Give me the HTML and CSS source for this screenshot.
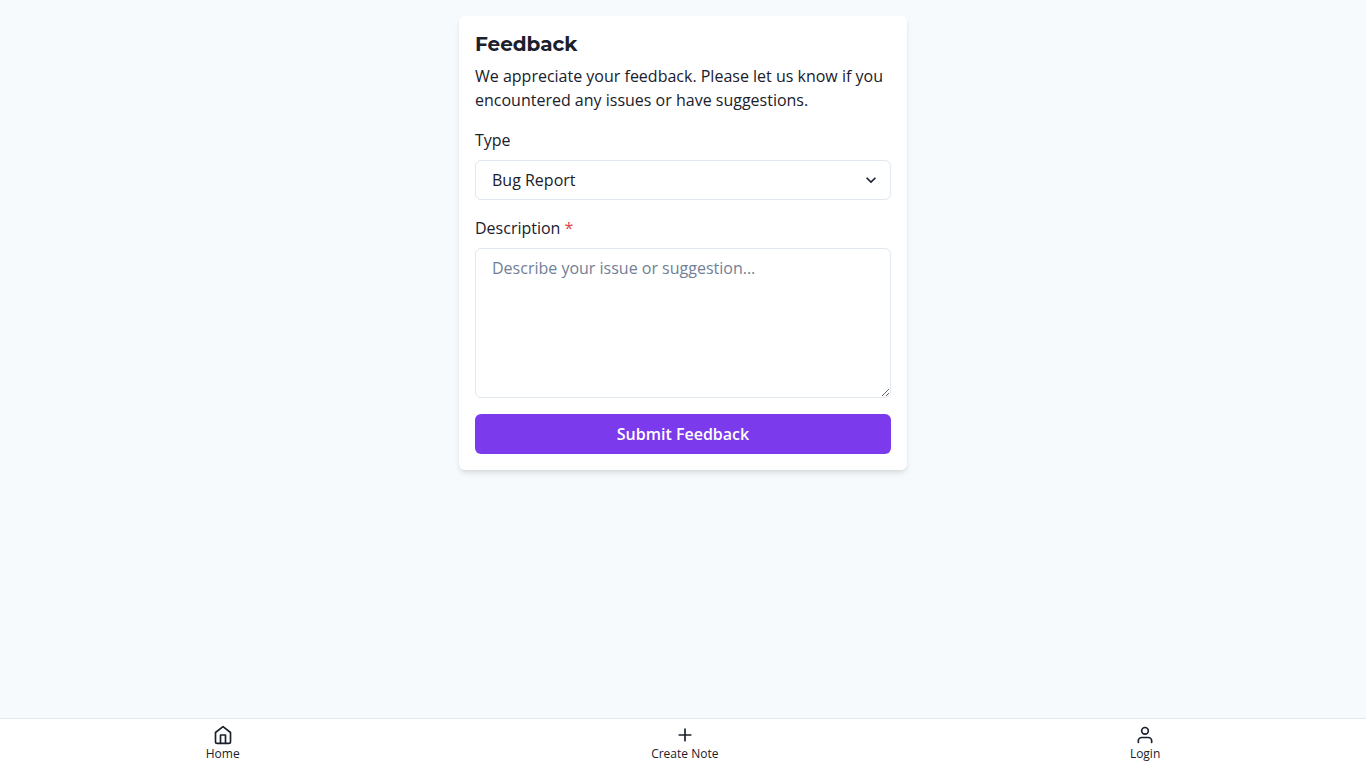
FILE: index.html
```html
<!DOCTYPE html>
<html lang="en">
<head>
<meta charset="utf-8">
<meta name="viewport" content="width=device-width, initial-scale=1">
<title>Feedback</title>
<link rel="stylesheet" href="styles.css">
</head>
<body>
<main class="page">
  <form class="card">
    <h1 class="title">Feedback</h1>
    <p class="intro">We appreciate your feedback. Please let us know if you encountered any issues or have suggestions.</p>
    <div class="field">
      <label for="type">Type</label>
      <div class="select-wrap">
        <select id="type" class="control select">
          <option>Bug Report</option>
        </select>
        <svg class="chevron" viewBox="0 0 24 24" aria-hidden="true"><path fill="currentColor" d="M16.59 8.59L12 13.17 7.41 8.59 6 10l6 6 6-6z"/></svg>
      </div>
    </div>
    <div class="field">
      <label for="description">Description <span class="required">*</span></label>
      <textarea id="description" class="control textarea" placeholder="Describe your issue or suggestion..." required></textarea>
    </div>
    <button class="submit" type="submit">Submit Feedback</button>
  </form>
</main>
<nav class="tabs">
  <a class="tab" href="#">
    <svg class="icon" viewBox="0 0 24 24" aria-hidden="true"><path d="M3 9l9-7 9 7v11a2 2 0 0 1-2 2H5a2 2 0 0 1-2-2z"/><path d="M9 22V12h6v10"/></svg>
    <span>Home</span>
  </a>
  <a class="tab" href="#">
    <svg class="icon" viewBox="0 0 24 24" aria-hidden="true"><path d="M12 5v14M5 12h14"/></svg>
    <span>Create Note</span>
  </a>
  <a class="tab" href="#">
    <svg class="icon" viewBox="0 0 24 24" aria-hidden="true"><path d="M20 21v-2a4 4 0 0 0-4-4H8a4 4 0 0 0-4 4v2"/><circle cx="12" cy="7" r="4"/></svg>
    <span>Login</span>
  </a>
</nav>
</body>
</html>
```

FILE: styles.css
```css
*, *::before, *::after { box-sizing: border-box; }

body {
  margin: 0;
  min-height: 100vh;
  display: flex;
  flex-direction: column;
  background: #f7fafc;
  color: #1a202c;
  font: 16px/24px "Open Sans", sans-serif;
}

.page {
  flex: 1;
  padding: 16px;
}

.card {
  max-width: 448px;
  margin: 0 auto;
  padding: 16px;
  display: flex;
  flex-direction: column;
  gap: 16px;
  background: #fff;
  border-radius: 6px;
  box-shadow: 0 4px 6px -1px rgba(0, 0, 0, 0.1), 0 2px 4px -1px rgba(0, 0, 0, 0.06);
}

.title {
  margin: 0 0 -8px;
  font: 700 20px/24px Montserrat, "Open Sans", sans-serif;
}

.intro { margin: 0; }

.field {
  display: flex;
  flex-direction: column;
  gap: 8px;
}

.required { color: #e53e3e; }

.select-wrap {
  display: grid;
  align-items: center;
}

.control {
  width: 100%;
  border: 1px solid #e2e8f0;
  border-radius: 6px;
  background: #fff;
  color: inherit;
  font: inherit;
}

.select {
  grid-area: 1 / 1;
  height: 40px;
  padding: 0 32px 0 16px;
  appearance: none;
}

.chevron {
  grid-area: 1 / 1;
  justify-self: end;
  width: 20px;
  height: 20px;
  margin-right: 10px;
  pointer-events: none;
}

.textarea {
  display: block;
  height: 150px;
  padding: 8px 16px;
  line-height: 22px;
  resize: vertical;
}

.textarea::placeholder { color: #718096; }

.submit {
  height: 40px;
  padding: 0 16px;
  border: 0;
  border-radius: 6px;
  background: #7c3aed;
  color: #fff;
  font: 600 16px/19px "Open Sans", sans-serif;
}

.tabs {
  display: flex;
  justify-content: space-around;
  padding: 6px 0 5px;
  border-top: 1px solid #e2e8f0;
  background: #fff;
}

.tab {
  display: flex;
  flex-direction: column;
  align-items: center;
  color: inherit;
  font-size: 12px;
  line-height: 18px;
  text-decoration: none;
}

.icon {
  width: 20px;
  height: 20px;
  fill: none;
  stroke: currentColor;
  stroke-width: 2;
  stroke-linecap: round;
  stroke-linejoin: round;
}
```
